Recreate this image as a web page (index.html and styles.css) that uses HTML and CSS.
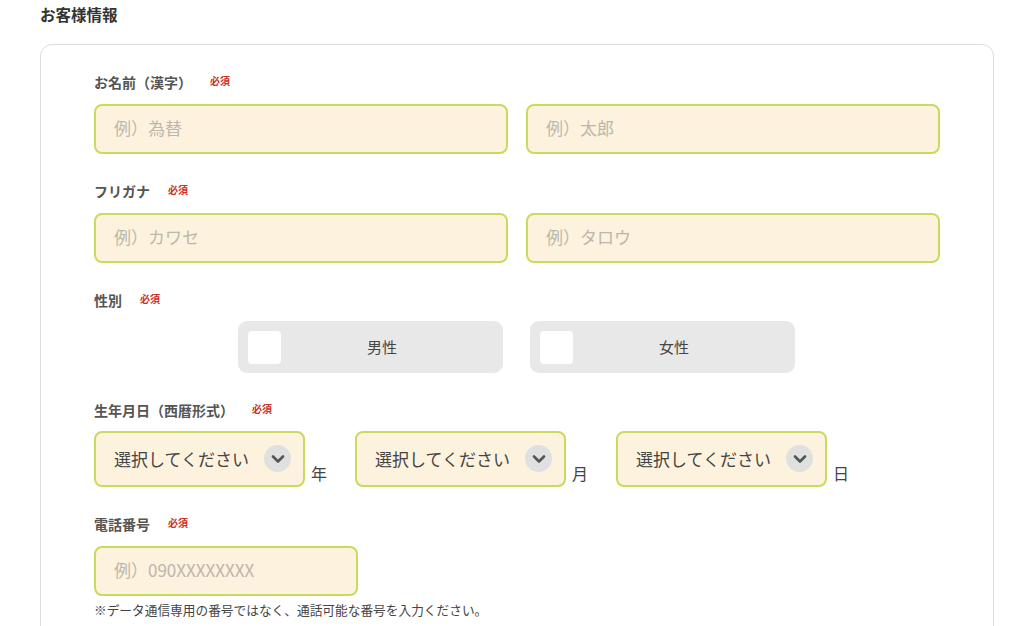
FILE: index.html
```html
<!DOCTYPE html>
<html lang="ja">
<head>
<meta charset="utf-8">
<link rel="stylesheet" href="styles.css">
</head>
<body>
<h2 class="title">お客様情報</h2>
<div class="card">
  <div class="field">
    <div class="label">お名前（漢字）<span class="req">必須</span></div>
    <div class="row two">
      <div class="input">例）為替</div>
      <div class="input">例）太郎</div>
    </div>
  </div>
  <div class="field">
    <div class="label">フリガナ<span class="req">必須</span></div>
    <div class="row two">
      <div class="input">例）カワセ</div>
      <div class="input">例）タロウ</div>
    </div>
  </div>
  <div class="field">
    <div class="label label-tight">性別<span class="req">必須</span></div>
    <div class="radios">
      <div class="radio"><span class="box"></span><span class="rtext">男性</span></div>
      <div class="radio"><span class="box"></span><span class="rtext">女性</span></div>
    </div>
  </div>
  <div class="field">
    <div class="label label-tight">生年月日（西暦形式）<span class="req">必須</span></div>
    <div class="dates">
      <div class="select">選択してください<span class="chev"><svg width="14" height="10" viewBox="0 0 14 10"><path d="M2 2.5 L7 7.5 L12 2.5" fill="none" stroke="#555" stroke-width="2.6" stroke-linecap="round" stroke-linejoin="round"/></svg></span></div>
      <span class="unit">年</span>
      <div class="select">選択してください<span class="chev"><svg width="14" height="10" viewBox="0 0 14 10"><path d="M2 2.5 L7 7.5 L12 2.5" fill="none" stroke="#555" stroke-width="2.6" stroke-linecap="round" stroke-linejoin="round"/></svg></span></div>
      <span class="unit">月</span>
      <div class="select">選択してください<span class="chev"><svg width="14" height="10" viewBox="0 0 14 10"><path d="M2 2.5 L7 7.5 L12 2.5" fill="none" stroke="#555" stroke-width="2.6" stroke-linecap="round" stroke-linejoin="round"/></svg></span></div>
      <span class="unit">日</span>
    </div>
  </div>
  <div class="field">
    <div class="label">電話番号<span class="req">必須</span></div>
    <div class="input tel">例）090XXXXXXXX</div>
    <p class="note">※データ通信専用の番号ではなく、通話可能な番号を入力ください。</p>
  </div>
</div>
</body>
</html>
```
FILE: styles.css
```css
* { box-sizing: border-box; }
body {
  margin: 0;
  background: #fff;
  font-family: "Noto Sans CJK JP", "Noto Sans", sans-serif;
  color: #333;
}
.title {
  margin: 0;
  padding: 3px 0 0 40px;
  height: 44px;
  font-size: 15.5px;
  font-weight: bold;
  line-height: 22px;
  color: #333;
}
.card {
  margin: 0 30px 0 40px;
  border: 1px solid #dcdcdc;
  border-radius: 12px;
  padding: 27px 53px 40px 53px;
  height: 700px;
}
.field { margin-bottom: 27px; }
.label {
  display: flex;
  align-items: center;
  height: 20px;
  font-size: 14px;
  font-weight: bold;
  color: #555;
  margin-bottom: 12px;
}
.label-tight { margin-bottom: 11px; }
.req {
  color: #c9302c;
  font-size: 10px;
  font-weight: bold;
  margin-left: 18px;
  margin-top: -4px;
}
.row.two {
  display: grid;
  grid-template-columns: 1fr 1fr;
  gap: 18px;
}
.input {
  height: 50px;
  border: 2px solid #c6dc5e;
  background: #fdf2dd;
  border-radius: 8px;
  padding: 0 0 3px 18px;
  display: flex;
  align-items: center;
  font-size: 17px;
  color: #bcb6ac;
}
.input.tel { width: 264px; }
.note {
  margin: 4px 0 0;
  font-size: 12.7px;
  color: #444;
  line-height: 20px;
}
.radios {
  display: flex;
  gap: 27px;
  padding-left: 144px;
}
.radio {
  width: 265px;
  height: 52px;
  background: #e8e8e8;
  border-radius: 9px;
  display: flex;
  align-items: center;
  padding-left: 10px;
}
.box {
  width: 33px;
  height: 33px;
  background: #fff;
  border-radius: 4px;
}
.rtext {
  flex: 1;
  text-align: center;
  font-size: 15px;
  color: #444;
  padding: 0 20px 2px 0;
}
.dates {
  display: flex;
  align-items: flex-end;
}
.select {
  width: 211px;
  height: 56px;
  border: 2px solid #c6dc5e;
  background: #fdf2dd;
  border-radius: 8px;
  display: flex;
  align-items: center;
  justify-content: space-between;
  padding: 0 12px 1px 18px;
  font-size: 17px;
  color: #444;
}
.chev {
  width: 27px;
  height: 27px;
  border-radius: 50%;
  background: #e0e0e0;
  display: flex;
  align-items: center;
  justify-content: center;
}
.unit {
  font-size: 16px;
  color: #444;
  margin: 0 28px 2px 6px;
  line-height: 24px;
}
```
